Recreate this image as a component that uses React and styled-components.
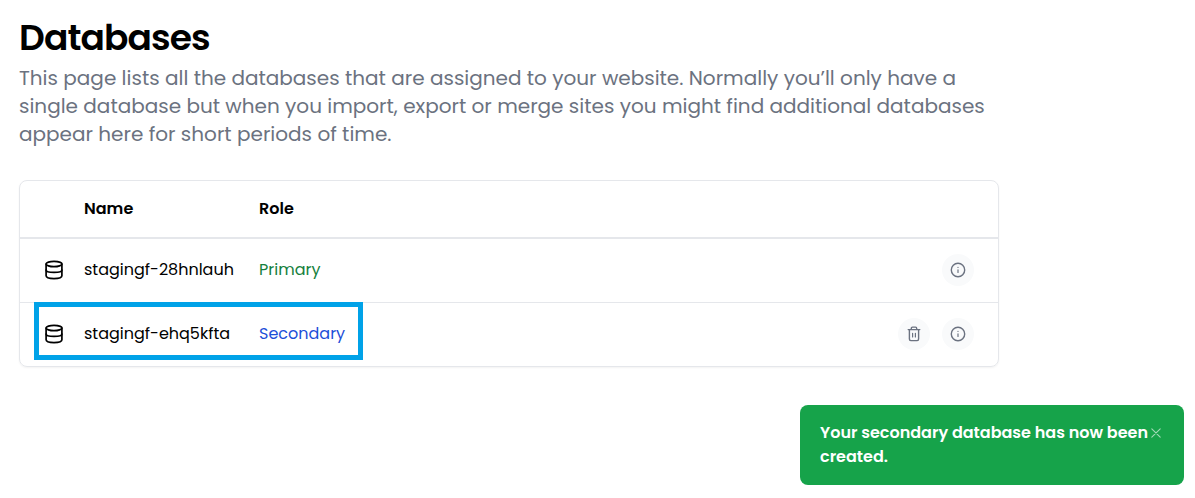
import React from "react";
import styled, { createGlobalStyle } from "styled-components";

const GlobalStyle = createGlobalStyle`
  * { box-sizing: border-box; }
  body {
    margin: 0;
    background: #fff;
    color: #000;
    font-family: Poppins, Inter, "Open Sans", sans-serif;
    font-size: 16px;
    line-height: 24px;
  }
`;

const Page = styled.main`
  max-width: 1018px;
  padding: 18px 19px 32px;
`;

const Title = styled.h1`
  margin: 0;
  font-size: 36px;
  line-height: 40px;
  font-weight: 600;
  letter-spacing: -0.025em;
`;

const Intro = styled.p`
  margin: 6px 0 32px;
  color: #6b7280;
  font-size: 20px;
  line-height: 28px;
`;

const Card = styled.section`
  border: 1px solid #e5e7eb;
  border-radius: 8px;
  box-shadow: 0 1px 2px rgba(0, 0, 0, 0.05);
`;

const Table = styled.table`
  width: 100%;
  table-layout: fixed;
  border-collapse: separate;
  border-spacing: 0;
`;

const HeadCell = styled.th`
  width: ${(p) => p.$width || "auto"};
  height: 58px;
  padding: 0;
  border-bottom: 2px solid #e5e7eb;
  text-align: left;
  font-weight: 600;
`;

const Cell = styled.td`
  position: relative;
  height: 63px;
  padding: 0 0 1px;
  color: ${(p) => p.$color || "#000"};
  white-space: nowrap;

  tr:not(:last-child) > & {
    height: 64px;
    border-bottom: 1px solid #e5e7eb;
  }
`;

const IconCell = styled(Cell)`
  padding-left: 24px;
`;

const Highlight = styled.span`
  position: absolute;
  z-index: 1;
  top: -1px;
  left: 14px;
  width: 329px;
  height: 58px;
  border: 5px solid #00a2e8;
  pointer-events: none;
`;

const Actions = styled.div`
  display: flex;
  justify-content: flex-end;
  gap: 12px;
  padding-right: 24px;
`;

const RoundButton = styled.button`
  display: grid;
  place-items: center;
  width: 32px;
  height: 32px;
  padding: 0;
  border: 0;
  border-radius: 50%;
  background: #f9fafb;
  color: #6b7280;
  cursor: pointer;
`;

const Icon = styled.svg`
  display: block;
  fill: none;
  stroke: currentColor;
  stroke-linecap: round;
  stroke-linejoin: round;
`;

const Toast = styled.div`
  position: fixed;
  right: 11px;
  bottom: 13px;
  display: flex;
  align-items: flex-start;
  width: 384px;
  padding: 16px 20px;
  border-radius: 8px;
  background: #16a34a;
  color: #fff;
  font-weight: 600;
`;

const Message = styled.p`
  flex: 1;
  margin: 0;
`;

const CloseButton = styled.button`
  display: grid;
  place-items: center;
  width: 16px;
  height: 24px;
  padding: 0;
  border: 0;
  background: transparent;
  color: #a2dab7;
  cursor: pointer;
`;

const DatabaseIcon = () => (
  <Icon width="20" height="20" viewBox="0 0 20 20" strokeWidth="1.7" aria-hidden="true">
    <ellipse cx="10" cy="4" rx="7.9" ry="2.7" />
    <path d="M2.1 4v11.8c0 1.7 3.4 2.8 7.9 2.8s7.9-1.1 7.9-2.8V4" />
    <path d="M2.1 10c0 1.5 3.4 2.4 7.9 2.4s7.9-.9 7.9-2.4" />
  </Icon>
);

const InfoIcon = () => (
  <Icon width="16" height="16" viewBox="0 0 16 16" strokeWidth="1.4" aria-hidden="true">
    <circle cx="8" cy="8" r="6.7" />
    <path d="M8 7.8v2.6M8 5.4v.1" strokeWidth="1.2" />
  </Icon>
);

const TrashIcon = () => (
  <Icon width="16" height="16" viewBox="0 0 16 16" strokeWidth="1.4" aria-hidden="true">
    <path d="M2.2 3.6h11.6M5.3 3.4V2.4c0-.8.5-1.3 1.2-1.3h3c.7 0 1.2.5 1.2 1.3v1" />
    <path d="M3.4 3.8v9.3c0 .9.6 1.5 1.4 1.5h6.4c.8 0 1.4-.6 1.4-1.5V3.8" />
    <path d="M6.6 7.3v3.7M9.4 7.3v3.7" strokeWidth="1.2" />
  </Icon>
);

const CloseIcon = () => (
  <Icon width="16" height="16" viewBox="0 0 16 16" strokeWidth="1.1" aria-hidden="true">
    <path d="M3.8 3.8l8.4 8.4M12.2 3.8l-8.4 8.4" />
  </Icon>
);

const databases = [
  { name: "stagingf-28hnlauh", role: "Primary", color: "#15803d" },
  { name: "stagingf-ehq5kfta", role: "Secondary", color: "#1d4ed8", isNew: true },
];

export default function App() {
  return (
    <>
      <GlobalStyle />
      <Page>
        <Title>Databases</Title>
        <Intro>
          This page lists all the databases that are assigned to your website. Normally you’ll only
          have a single database but when you import, export or merge sites you might find
          additional databases appear here for short periods of time.
        </Intro>
        <Card>
          <Table>
            <thead>
              <tr>
                <HeadCell $width="64px" aria-label="Type" />
                <HeadCell $width="175px">Name</HeadCell>
                <HeadCell>Role</HeadCell>
                <HeadCell $width="120px" aria-label="Actions" />
              </tr>
            </thead>
            <tbody>
              {databases.map((db) => (
                <tr key={db.name}>
                  <IconCell>
                    <DatabaseIcon />
                    {db.isNew && <Highlight />}
                  </IconCell>
                  <Cell>{db.name}</Cell>
                  <Cell $color={db.color}>{db.role}</Cell>
                  <Cell>
                    <Actions>
                      {db.isNew && (
                        <RoundButton type="button" aria-label={`Delete ${db.name}`}>
                          <TrashIcon />
                        </RoundButton>
                      )}
                      <RoundButton type="button" aria-label={`Details of ${db.name}`}>
                        <InfoIcon />
                      </RoundButton>
                    </Actions>
                  </Cell>
                </tr>
              ))}
            </tbody>
          </Table>
        </Card>
      </Page>
      <Toast role="status">
        <Message>Your secondary database has now been created.</Message>
        <CloseButton type="button" aria-label="Dismiss">
          <CloseIcon />
        </CloseButton>
      </Toast>
    </>
  );
}
